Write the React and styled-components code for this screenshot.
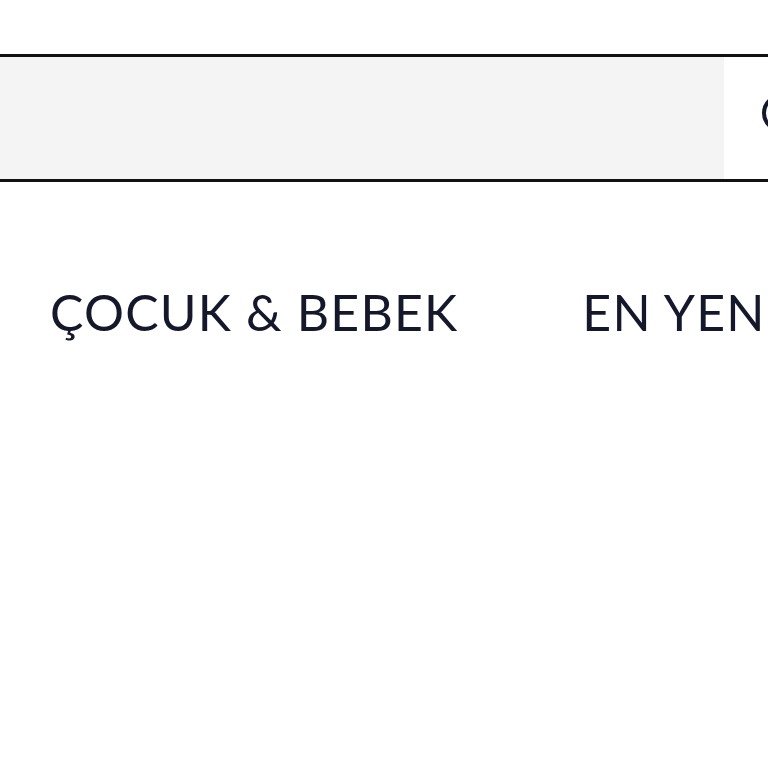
import styled, { createGlobalStyle } from 'styled-components';

const Global = createGlobalStyle`
  html, body { margin: 0; padding: 0; background: #fff; }
  body { font-family: "Lato", "Noto Sans", sans-serif; overflow: hidden; }
`

export default function App() {
  const menu = ['ÇOCUK & BEBEK', 'EN YENİLER', 'KAMPANYALAR']
  return <Page>
    <Global />
    <SearchBar>
      <SearchInput placeholder='' />
      <SearchButton aria-label='Ara'>
        <svg width='48' height='48' viewBox='0 0 48 48' fill='none' stroke='#15172b' strokeWidth='4'>
          <circle cx='20' cy='20' r='17' />
          <line x1='32' y1='32' x2='44' y2='44' />
        </svg>
      </SearchButton>
    </SearchBar>
    <Nav>
      {menu.map((item, index) => <NavItem key={index}>{item}</NavItem>)}
    </Nav>
  </Page>
}

const Page = styled.div`
  width: 768px;
  height: 768px;
  overflow: hidden;
  padding-top: 54px;
  box-sizing: border-box;
`
const SearchBar = styled.div`
  display: flex;
  height: 128px;
  box-sizing: border-box;
  border-top: 3px solid #111;
  border-bottom: 3px solid #111;
  width: 900px;
`
const SearchInput = styled.input`
  width: 724px;
  flex: none;
  border: none;
  outline: none;
  background: #f4f4f4;
  margin: 0;
  padding: 0;
`
const SearchButton = styled.button`
  flex: none;
  border: none;
  background: #fff;
  padding: 0 0 2px 37px;
  display: flex;
  align-items: center;
`
const Nav = styled.nav`
  display: flex;
  gap: 124px;
  padding: 105px 0 0 50px;
  white-space: nowrap;
`
const NavItem = styled.a`
  font-family: "Lato", "Noto Sans", sans-serif;
  font-size: 50px;
  letter-spacing: 1.2px;
  color: #15172b;
  line-height: 1;
`
